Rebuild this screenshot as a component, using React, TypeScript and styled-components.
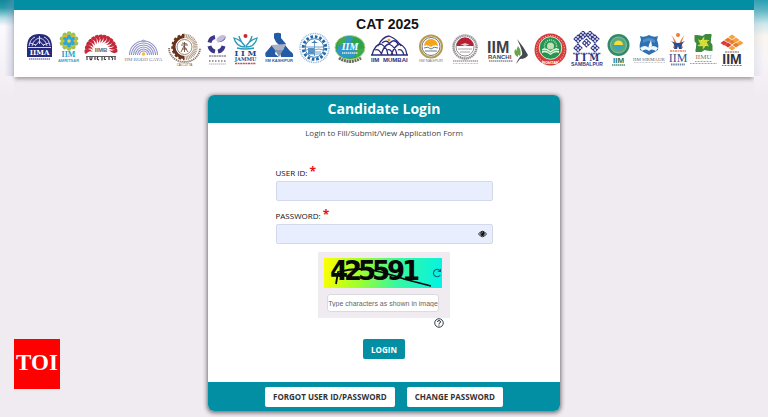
import React, { useState } from "react";
import styled, { createGlobalStyle } from "styled-components";

const teal = "#028fa3";

const GlobalStyle = createGlobalStyle`
  * { box-sizing: border-box; }
  body {
    margin: 0;
    background: #f0ebf0;
    color: #333;
    font-family: "Open Sans", "Noto Sans", sans-serif;
  }
`;

/* ---------- layout ---------- */

const Page = styled.div`
  display: grid;
  grid-template-columns: 14px minmax(0, 1fr) 14px;
  min-height: 100vh;
`;

const Edge = styled.div<{ $side: "left" | "right" }>`
  background: ${(p) =>
    p.$side === "left"
      ? "linear-gradient(to left, rgba(140, 150, 185, 0.35), rgba(255, 255, 255, 0) 70%) 0 0 / 100% 76px no-repeat, linear-gradient(#12889c 0, #2a9aab 8px, #b5dce4 18px, #fbfafd 26px, #f7f4f9 60px, #f0ebf0 96px)"
      : "linear-gradient(to right, rgba(140, 150, 185, 0.15), rgba(255, 255, 255, 0) 70%) 0 0 / 100% 76px no-repeat, linear-gradient(#28a0b2 0, #5bb6c4 10px, #cfe8ec 24px, #faf5ee 36px, #f7f4f9 60px, #f0ebf0 96px)"};
`;

const Content = styled.div`
  display: flex;
  flex-direction: column;
`;

const Header = styled.header`
  border-top: 10px solid ${teal};
  padding: 7px 10px 10px 11px;
  background: #fff;
  box-shadow: 0 3px 4px -1px rgba(60, 50, 60, 0.45);
`;

const ExamTitle = styled.h1`
  margin: 0;
  padding-left: 6px;
  font: bold 14px/14px "Liberation Sans", Arial, sans-serif;
  color: #151515;
  text-align: center;
`;

const LogoRow = styled.div`
  display: flex;
  justify-content: space-between;
`;

const LogoSvg = styled.svg`
  display: block;
  flex: none;
  height: 36px;
  font-family: "Liberation Sans", Arial, sans-serif;
`;

const Main = styled.main`
  display: flex;
  justify-content: center;
  padding: 18px 0 6px;
`;

const Card = styled.section`
  width: 352px;
  border-radius: 6px;
  overflow: hidden;
  background: #fff;
  box-shadow: 0 1px 4px 1px rgba(50, 45, 50, 0.65);
`;

const CardTitle = styled.h2`
  margin: 0;
  background: ${teal};
  color: #fff;
  font-size: 14px;
  line-height: 28px;
  font-weight: 700;
  text-align: center;
`;

const CardBody = styled.form`
  display: flex;
  flex-direction: column;
  align-items: center;
  padding: 2px 0 23px;
`;

const Intro = styled.p`
  margin: 0 0 25px;
  font-size: 8px;
  line-height: 16px;
  color: #444;
`;

const Field = styled.div`
  width: 217px;
  margin-bottom: 8px;
`;

const Label = styled.label`
  display: block;
  padding-bottom: 1px;
  font-size: 8px;
  line-height: 14px;
  color: #111;
`;

const Required = styled.span`
  color: #ee1111;
  font-size: 12px;
  font-weight: 700;
  line-height: 10px;
`;

const InputWrap = styled.div`
  display: flex;
  align-items: center;
  height: 20px;
  padding-right: 5px;
  border: 1px solid #d3d9ea;
  border-radius: 2px;
  background: #e8eefe;
`;

const TextInput = styled.input`
  flex: 1;
  min-width: 0;
  height: 18px;
  padding: 0 6px;
  border: 0;
  background: transparent;
  font: inherit;
  font-size: 8px;
  outline-color: ${teal};
`;

const IconButton = styled.button`
  display: flex;
  padding: 0;
  border: 0;
  background: transparent;
  color: #111;
  cursor: pointer;
`;

const CaptchaPanel = styled.div`
  display: flex;
  flex-direction: column;
  align-items: center;
  gap: 6px;
  width: 132px;
  padding: 6px 8px 6px 6px;
  background: #f0ebf0;
`;

const CaptchaImage = styled.div`
  display: flex;
  align-items: center;
  justify-content: space-between;
  width: 118px;
  height: 30px;
  background: linear-gradient(100deg, #ffff00 0%, #9dff2e 32%, #38f7a0 62%, #00f3e8 100%);
`;

const CaptchaInput = styled.input`
  width: 112px;
  height: 18px;
  padding: 0;
  border: 1px solid #dcd9e0;
  border-radius: 3px;
  background: #fff;
  font: 7px "Liberation Sans", Arial, sans-serif;
  color: #333;
  text-align: center;
  &::placeholder { color: #666; opacity: 1; }
`;

const HelpRow = styled.div`
  display: flex;
  justify-content: flex-end;
  width: 132px;
  height: 21px;
  padding-right: 6px;
`;

const Button = styled.button<{ $primary?: boolean }>`
  height: 20px;
  padding: 0 8px;
  border: 0;
  border-radius: 2px;
  background: ${(p) => (p.$primary ? teal : "#fff")};
  color: ${(p) => (p.$primary ? "#fff" : "#333")};
  font: 700 8px "Open Sans", "Noto Sans", sans-serif;
  cursor: pointer;
`;

const CardFooter = styled.footer`
  display: flex;
  align-items: center;
  justify-content: center;
  gap: 12px;
  height: 29px;
  background: ${teal};
`;

const Badge = styled.div`
  position: fixed;
  left: 14px;
  bottom: 28px;
  width: 46px;
  height: 50px;
  background: #fe0000;
  color: #fff;
  font: bold 23px/47px "Liberation Serif", "Times New Roman", serif;
  text-align: center;
`;

/* ---------- institute logos ---------- */

type LogoProps = { name: string; width: number; children: React.ReactNode };

const Logo = ({ name, width, children }: LogoProps) => (
  <LogoSvg width={width} viewBox={`0 0 ${width} 36`} role="img" aria-label={name}>
    {children}
  </LogoSvg>
);

const turn = (n: number, step = 360 / n, start = 0) =>
  Array.from({ length: n }, (_, i) => start + i * step);

const serif = '"Liberation Serif", serif';
const slab = '"DejaVu Serif", serif';

const Ahmedabad = () => (
  <Logo name="IIM Ahmedabad" width={30}>
    <path d="M2 26V16Q2 3 14.500 3T27 16V26Z" fill="#26297c" />
    <g fill="none" stroke="#e9e9f5" strokeWidth=".9">
      <path d="M4 15Q5 8 10 6M25 15Q24 8 19 6M14.500 13V5M7 15Q8 9 14 7M22 15Q21 9 15 7M10 15L14.500 10L19 15M5 12L11 14M24 12L18 14" />
      <path d="M3 16.500H26" />
    </g>
    <text x="14.500" y="24" textAnchor="middle" fontSize="7" fontWeight="700" fontFamily={slab} fill="#fff">IIMA</text>
    <path d="M4 28H25" stroke="#7a7cb4" strokeWidth="1.400" strokeDasharray="1.500 .5" />
  </Logo>
);

const Amritsar = () => (
  <Logo name="IIM Amritsar" width={26}>
    <g transform="translate(14 10)">
      {turn(10).map((a) => (
        <circle key={a} cx="0" cy="-7.500" r="2.200" fill="#8fc457" transform={`rotate(${a})`} />
      ))}
      <circle r="8" fill="#a7c545" />
      {turn(8).map((a) => (
        <path key={a} d="M0 -8L2 -5L0 -3L-2 -5Z" fill="#f1b133" transform={`rotate(${a})`} />
      ))}
      {turn(6).map((a) => (
        <ellipse key={a} cy="-3" rx="2" ry="3.500" fill="#2ba9d9" transform={`rotate(${a})`} />
      ))}
      <circle r="1.800" fill="#f6d34b" />
    </g>
    <text x="13.500" y="26" textAnchor="middle" fontSize="8" fontWeight="700" fontFamily={serif} fill="#2b9dcb">IIM</text>
    <text x="13.500" y="31" textAnchor="middle" fontSize="4" fontWeight="700" fill="#35a4cf">AMRITSAR</text>
  </Logo>
);

const Bangalore = () => (
  <Logo name="IIM Bangalore" width={41}>
    <g transform="translate(20 20)">
      {turn(13, 15, -90).map((a) => (
        <path key={a} d="M-1 -8Q4 -12 1 -16.500Q-2 -17 -3 -15Q1 -12 -1 -8Z" fill="#c22a3b" transform={`rotate(${a})`} />
      ))}
    </g>
    <text x="20" y="21" textAnchor="middle" fontSize="6" fontWeight="700" fill="#666">IIMB</text>
    <path d="M5 25.500H35" stroke="#333" strokeWidth=".8" />
    <path d="M6 26V29M9 26V28Q11 30 11 26M14 26V29M17 26Q15 28 18 29M21 26V29.500M24 26Q22 29 25 28.500M28 26V29M30 26Q33 27 31 29M34 26V29" fill="none" stroke="#333" strokeWidth="1.100" />
  </Logo>
);

const BodhGaya = () => (
  <Logo name="IIM Bodh Gaya" width={43}>
    <g fill="none" stroke="#9095c7" strokeWidth="1.100">
      {[4, 6, 8, 10, 12, 14].map((r) => (
        <path key={r} d={`M${21.5 - r} 24A${r} ${r} 0 0 1 ${21.5 + r} 24`} />
      ))}
    </g>
    <path d="M18 11Q21.500 6 25 11Z" fill="#a6a9d0" />
    <circle cx="21.500" cy="23" r="1.800" fill="#f0bd3d" />
    <text x="21.500" y="30" textAnchor="middle" fontSize="5" fontFamily={serif} fill="#7479a4">IIM BODH GAYA</text>
  </Logo>
);

const Calcutta = () => (
  <Logo name="IIM Calcutta" width={39}>
    <path d="M19.500 5.500A10.500 10.500 0 0 0 19.500 26.500" fill="none" stroke="#68331c" strokeWidth="3" />
    <path d="M19.500 4A12 12 0 0 0 19.500 28" fill="none" stroke="#68331c" strokeWidth="2.500" strokeDasharray="2.500 2" />
    <path d="M19.500 5A11 11 0 0 1 19.500 27" fill="none" stroke="#b49d87" strokeWidth="4.500" strokeDasharray="1 .6" />
    <circle cx="19.500" cy="16" r="7.500" fill="#fff" stroke="#8c6a55" strokeWidth=".8" />
    <path d="M19.500 11V21M16 14H23M17 18H22M16 21L19 15L23 21M17 12L22 13" stroke="#75513e" strokeWidth=".9" fill="none" />
    <path d="M4 17A15.500 14 0 0 0 35 17" fill="none" stroke="#8b7466" strokeWidth="1.800" strokeDasharray="1.300 .7" />
    <text x="19.500" y="35" textAnchor="middle" fontSize="3" fill="#685046">CALCUTTA</text>
  </Logo>
);

const Indore = () => (
  <Logo name="IIM Indore" width={27}>
    <g fill="none" stroke="#3a3688" strokeWidth="4">
      <path d="M11 6A7 7 0 0 0 5.500 11.500" />
      <path d="M5.500 15A7 7 0 0 0 11 20.500" />
      <path d="M14 20.500A7 7 0 0 0 19.500 15" />
    </g>
    <ellipse cx="17" cy="7.500" rx="5" ry="3" fill="#c3bedd" transform="rotate(-30 17 7.500)" />
    <path d="M13 11Q19 11 22 5Q21 12 13 11Z" fill="#655eaa" />
    <path d="M5 25H22" stroke="#96899a" strokeWidth="1.600" strokeDasharray="2 .5" />
    <path d="M5 30H23" stroke="#a29aa2" strokeWidth="2" strokeDasharray="1.500 1.500" />
    <path d="M5 33H22" stroke="#b4adb4" strokeWidth="1" strokeDasharray="1.500 .5" />
  </Logo>
);

const Jammu = () => (
  <Logo name="IIM Jammu" width={30}>
    <circle cx="14.500" cy="5" r="2" fill="#cd2534" />
    <g fill="none" stroke="#2b99b8" strokeWidth="1.300">
      <path d="M14.500 16Q5 16 3 7Q10 9 14 15Q9 10 8 5" />
      <path d="M14.500 16Q24 16 26 7Q19 9 15 15Q20 10 21 5" />
      <path d="M6 17Q14 19 23 17" />
    </g>
    <text x="14.500" y="25" textAnchor="middle" fontSize="8" fontWeight="700" fontFamily={slab} fill="#174689">I I M</text>
    <text x="14.500" y="30" textAnchor="middle" fontSize="5" fontWeight="700" fontFamily={slab} fill="#245391">JAMMU</text>
    <path d="M4 32.500H25" stroke="#ca4b56" strokeWidth="1.600" strokeDasharray="2 .6" />
  </Logo>
);

const Kashipur = () => (
  <Logo name="IIM Kashipur" width={36}>
    <path d="M13 2.500Q17 1 20 2.500V7L25 13L19 15L15 11L13 7Z" fill="#235ba6" />
    <path d="M11 14L15 19L14 23L18 26H5Q3 22 6 20Z" fill="#235ba6" />
    <path d="M24 14L29 20Q33 22 32 26H20L19 21L22 19Z" fill="#235ba6" />
    <path d="M10 14L25 13L22 19L14 19Z" fill="#aab2c2" />
    <path d="M14 19L22 19L18 26Z" fill="#8793ab" />
    <text x="18" y="31" textAnchor="middle" fontSize="4" fontWeight="700" fill="#235ba6">IIM KASHIPUR</text>
  </Logo>
);

const Kozhikode = () => (
  <Logo name="IIM Kozhikode" width={34}>
    <circle cx="17.500" cy="17" r="14.500" fill="none" stroke="#95b5d4" strokeWidth="1.500" strokeDasharray="1 .8" />
    <circle cx="17.500" cy="17" r="11.300" fill="none" stroke="#2369a8" strokeWidth="3" strokeDasharray="2.600 1.840" />
    <circle cx="17.500" cy="17" r="9.300" fill="#fff" stroke="#417eb4" strokeWidth="1" />
    <path d="M8.500 16H26.500M9 19Q12 17 17 19Q22 17 26 19M17.500 9V25M11 23H24M11 21H24" fill="none" stroke="#488bc0" strokeWidth=".8" />
    <path d="M14 12L17.500 10L21 12Z" fill="#3978b2" />
    <path d="M11 17H17V23H11Z" fill="#5a90c2" />
  </Logo>
);

const Lucknow = () => (
  <Logo name="IIM Lucknow" width={38}>
    <ellipse cx="19" cy="16.500" rx="15" ry="12" fill="#2fa24e" stroke="#b4d37b" />
    <path d="M5 20Q10 10 12 6Q18 4 23 7L19 11L26 15L24 25Q15 30 8 24Z" fill="#3196c8" />
    <path d="M8 8L16 6L13 13L7 15ZM25 19L33 17Q31 24 25 27Z" fill="#42aa4a" />
    <text x="19" y="19" textAnchor="middle" fontSize="10" fontStyle="italic" fontWeight="700" fontFamily={serif} fill="#fff">IIM</text>
    <path d="M11 22H27" stroke="#d7efe0" strokeWidth="1.600" strokeDasharray="1.500 .5" />
    <path d="M8 27Q19 34 30 27" fill="none" stroke="#676b5b" strokeWidth="3" strokeDasharray="2 .7" />
  </Logo>
);

const Mumbai = () => (
  <Logo name="IIM Mumbai" width={45}>
    <g fill="none" stroke="#2c2e7b" strokeWidth="1.300">
      <path d="M3 24Q6 13 12 13Q18 16 19 24M12 24Q15 14 20 13Q27 16 28 24M22 24Q26 14 31 13Q37 16 38 24M9 15Q13 6 20 5Q28 8 32 15M13 12Q18 8 21 13M21 12Q25 7 29 13M2 24H39M6 19Q10 17 13 24M18 19Q22 17 24 24M29 19Q33 17 35 24" />
    </g>
    <circle cx="20" cy="9" r="1.500" fill="#ef9b36" />
    <text x="2" y="31" fontSize="6" fontWeight="700" fill="#2c2e7b">IIM</text>
    <text x="14" y="31" fontSize="6" fontWeight="700" fill="#2c2e7b">MUMBAI</text>
  </Logo>
);

const Nagpur = () => (
  <Logo name="IIM Nagpur" width={34}>
    <circle cx="17" cy="15.500" r="11" fill="#fff" stroke="#b39a56" strokeWidth="2" />
    <circle cx="17" cy="15.500" r="9" fill="none" stroke="#4d544f" strokeWidth=".8" />
    <path d="M10 15A7 7 0 0 1 24 15Q20 13 17 16Q13 13 10 15Z" fill="#f5a51d" />
    <path d="M10 17Q14 15 17 18Q20 15 24 17M11 20H23" fill="none" stroke="#657b87" strokeWidth="1" />
    <text x="17" y="31" textAnchor="middle" fontSize="4" fill="#78766f">IIM NAGPUR</text>
  </Logo>
);

const Raipur = () => (
  <Logo name="IIM Raipur" width={35}>
    <circle cx="17" cy="16" r="11.500" fill="none" stroke="#959095" strokeWidth="2.400" strokeDasharray="1.500 .5" />
    <circle cx="17" cy="16" r="9" fill="#fff" stroke="#958e8f" />
    <path d="M8.500 15A8.500 8.500 0 0 1 25.500 15Z" fill="#b71f35" />
    <path d="M12 14L17 12L22 14Q19 14 17 15Q15 14 12 14Z" fill="#fff" opacity=".75" />
    <path d="M10 18H24M12 21H22" stroke="#a5a1a1" />
    <path d="M5 30H30" stroke="#a29d9e" strokeWidth="1.600" strokeDasharray="1.500 .5" />
    <path d="M5 32.500H30" stroke="#c4bfc1" strokeWidth="1" strokeDasharray="1 .5" />
  </Logo>
);

const Ranchi = () => (
  <Logo name="IIM Ranchi" width={48}>
    <text x="4" y="22" fontSize="16" fontWeight="700" fill="#3d4047">IIM</text>
    <text x="5" y="28" fontSize="6" fontWeight="700" fill="#45484c">RANCHI</text>
    <path d="M6 30H30" stroke="#8b8d8f" strokeWidth="1.400" strokeDasharray="1.500 .5" />
    <path d="M34 8Q40 15 45 24Q43 28 37 28L33 33Q36 26 39 24Q40 20 34 8Z" fill="#454951" />
    <path d="M35 15Q39 20 37 25Q31 22 35 15ZM32 18Q36 22 35 26Q30 24 32 18Z" fill="#68a549" />
  </Logo>
);

const Rohtak = () => (
  <Logo name="IIM Rohtak" width={38}>
    <circle cx="19.500" cy="18.500" r="16" fill="#d63b3c" />
    <circle cx="19.500" cy="18.500" r="14" fill="none" stroke="#f2a39c" strokeWidth="1.200" strokeDasharray="1 1.500" />
    <circle cx="19.500" cy="17" r="11.300" fill="#259651" stroke="#fff" strokeWidth=".8" />
    <circle cx="19.500" cy="15" r="6" fill="none" stroke="#b9deb5" strokeWidth="1.500" strokeDasharray="1 1" />
    <circle cx="19.500" cy="15" r="3.500" fill="#c6dfba" />
    <path d="M11 18Q15 16 19.500 20Q24 16 28 18V22Q24 20 19.500 24Q15 20 11 22Z" fill="#e8f4df" />
    <path d="M11 19.500Q15 18 19.500 22Q24 18 28 19.500" fill="none" stroke="#4ca565" strokeWidth=".8" />
    <text x="19.500" y="33" textAnchor="middle" fontSize="4" fontWeight="700" fill="#fff">ROHTAK</text>
  </Logo>
);

const Sambalpur = () => (
  <Logo name="IIM Sambalpur" width={34}>
    <g fill="none" stroke="#303786" strokeWidth="1.100">
      {[[17.5, 12], [9, 8], [26, 8], [9, 17], [26, 17], [14, 4], [21, 4]].map(([x, y]) => (
        <g key={`${x}-${y}`} transform={`translate(${x} ${y})`}>
          <path d="M0 -4L4 0L0 4L-4 0ZM-2 -2L2 2M2 -2L-2 2" strokeDasharray="3 .5" />
        </g>
      ))}
    </g>
    <path d="M4 22.500H32" stroke="#5b609e" strokeWidth="1.400" strokeDasharray="2 .5" />
    <text x="18" y="30" textAnchor="middle" fontSize="9" fontWeight="700" fontFamily={slab} fill="#28307f">I I M</text>
    <text x="18" y="35" textAnchor="middle" fontSize="5" fontWeight="700" fill="#343a88">SAMBALPUR</text>
  </Logo>
);

const Shillong = () => (
  <Logo name="IIM Shillong" width={28}>
    <circle cx="15.500" cy="14" r="11" fill="#328b68" />
    <circle cx="15.500" cy="14" r="8" fill="#5ba583" stroke="#86c2a5" strokeWidth="1" />
    <path d="M11 14A4.500 4.500 0 0 1 20 14Z" fill="#f6e02e" />
    <path d="M11 14A4.500 4.500 0 0 0 20 14Z" fill="#36a4c9" />
    <text x="15.500" y="32" textAnchor="middle" fontSize="8" fontWeight="700" fill="#1f7657">IIM</text>
    <path d="M9 34H22" stroke="#50917b" strokeWidth="1.400" strokeDasharray="1.500 .5" />
  </Logo>
);

const Sirmaur = () => (
  <Logo name="IIM Sirmaur" width={37}>
    <path d="M9 5Q13 7 18 4Q23 7 27 5L26 9Q28 13 27 19Q24 21 18 24Q12 21 9 19Q8 13 10 9Z" fill="#2f70b1" />
    <path d="M12 9Q18 5 24 9V12Q18 8 12 12Z" fill="#4f8fc7" />
    <path d="M9 17Q14 13 18 17Q22 13 27 17L25 20Q20 17 18 20Q15 17 11 20Z" fill="#f1f7ff" />
    <path d="M20 9L21 15L17 18L18 14Z" fill="#fff" />
    <text x="18" y="30" textAnchor="middle" fontSize="5" fontFamily={serif} fill="#66666c">IIM SIRMAUR</text>
    <path d="M3 31.500H34" stroke="#bcbcc0" strokeWidth=".8" strokeDasharray="1 .5" />
  </Logo>
);

const Trichy = () => (
  <Logo name="IIM Trichy" width={20}>
    <circle cx="10" cy="4" r="2" fill="#ee7936" />
    <path d="M3 4Q9 9 9 17H5Q8 10 3 4ZM17 4Q11 9 11 17H15Q12 10 17 4Z" fill="#ef7c36" />
    <path d="M3 10Q10 14 17 10Q12 14 14 18H11L10 15L9 18H6Q8 14 3 10Z" fill="#284c93" />
    <path d="M2 20H18" stroke="#ec8b59" strokeWidth="1.600" strokeDasharray="2 .5" />
    <text x="10" y="31" textAnchor="middle" fontSize="12" fontFamily={serif} fill="#36558f">IIM</text>
    <path d="M3 33.500H17" stroke="#6d84a8" strokeWidth="1.800" strokeDasharray="1.500 .7" />
  </Logo>
);

const Udaipur = () => (
  <Logo name="IIM Udaipur" width={31}>
    <g transform="translate(15.500 12)">
      {turn(4).map((a) => (
        <path key={a} d="M-8 -8L-1 -7L2 -9H8L7 -1L2 -3L-3 -3Z" fill="#3e893e" transform={`rotate(${a})`} />
      ))}
      {turn(6).map((a) => (
        <path key={a} d="M0 0Q-4 -3 1 -6.500Q0 -3 2 -2Z" fill="#d7dc31" transform={`rotate(${a})`} />
      ))}
    </g>
    <text x="15.500" y="28" textAnchor="middle" fontSize="7" fontFamily={serif} fill="#6f7c6b">IIMU</text>
    <path d="M7 30.500H24M2 32.500H29" stroke="#9ba595" strokeWidth="1" strokeDasharray="1 .5" />
  </Logo>
);

const Visakhapatnam = () => (
  <Logo name="IIM Visakhapatnam" width={25}>
    {[[13, 6, 0], [9, 9, 1], [17, 9, 0], [5, 12, 2], [13, 11, 1], [21, 12, 0], [9, 14, 2], [17, 14, 1], [13, 17, 0]].map(([x, y, c]) => (
      <path key={`${x}-${y}`} d="M0 -2.500L3.500 0L0 2.500L-3.500 0Z" transform={`translate(${x} ${y})`} fill={["#f3a23c", "#ee7a2e", "#dc3a32"][c]} />
    ))}
    <path d="M6 21H20" stroke="#7b5856" strokeWidth="1.200" strokeDasharray="2 .5" />
    <text x="13" y="33" textAnchor="middle" fontSize="14" fontWeight="700" fill="#313137">IIM</text>
    <path d="M3 34.500H23" stroke="#777" strokeWidth="1" strokeDasharray="1 .5" />
  </Logo>
);

const logos = [
  Ahmedabad, Amritsar, Bangalore, BodhGaya, Calcutta, Indore, Jammu,
  Kashipur, Kozhikode, Lucknow, Mumbai, Nagpur, Raipur, Ranchi,
  Rohtak, Sambalpur, Shillong, Sirmaur, Trichy, Udaipur, Visakhapatnam,
];

/* ---------- small icons ---------- */

const EyeIcon = () => (
  <svg width="9" height="8" viewBox="0 0 18 16" aria-hidden="true">
    <path d="M1 8Q9 -3 17 8Q9 19 1 8Z" fill="none" stroke="currentColor" strokeWidth="1.800" />
    <circle cx="9" cy="7.500" r="4.500" fill="currentColor" />
    <path d="M7 7Q7 5 9 5" fill="none" stroke="#e8eefe" strokeWidth="1.200" />
  </svg>
);

const RefreshIcon = () => (
  <svg width="10" height="12" viewBox="0 0 10 12" aria-hidden="true">
    <path d="M7.800 3.500A3.700 3.700 0 1 0 8.300 8" fill="none" stroke="#0c6378" strokeWidth="1.100" />
    <path d="M9 1.500V5H5.500Z" fill="#0c6378" />
  </svg>
);

const HelpIcon = () => (
  <svg width="10" height="10" viewBox="0 0 20 20" aria-hidden="true">
    <circle cx="10" cy="10" r="8.500" fill="none" stroke="#333b45" strokeWidth="2" />
    <path d="M7 8Q7 5 10 5T13 8Q13 10 10 11V13" fill="none" stroke="#333b45" strokeWidth="2" />
    <circle cx="10" cy="15.500" r="1.200" fill="#333b45" />
  </svg>
);

const captchaDigits = [
  { digit: "4", x: 6 },
  { digit: "2", x: 20 },
  { digit: "5", x: 34 },
  { digit: "5", x: 48 },
  { digit: "9", x: 63 },
  { digit: "1", x: 78 },
];

const CaptchaSvg = styled.svg`
  display: block;
  overflow: visible;
  font: bold 26px "DejaVu Sans", sans-serif;
  fill: #080808;
`;

const CaptchaDrawing = () => (
  <CaptchaSvg width="108" height="30" viewBox="0 0 108 30" role="img" aria-label="425591">
    {captchaDigits.map(({ digit, x }) => (
      <text key={x} x={x} y="22">{digit}</text>
    ))}
    <path d="M12 26L14 14Q36 8 57 14T80 21L107 28" fill="none" stroke="#080808" strokeWidth="1.800" />
  </CaptchaSvg>
);

export default function App() {
  const [visible, setVisible] = useState(false);

  return (
    <>
      <GlobalStyle />
      <Page>
        <Edge $side="left" />
        <Content>
          <Header>
            <ExamTitle>CAT 2025</ExamTitle>
            <LogoRow>
              {logos.map((Institute, i) => (
                <Institute key={i} />
              ))}
            </LogoRow>
          </Header>
          <Main>
            <Card>
              <CardTitle>Candidate Login</CardTitle>
              <CardBody onSubmit={(e) => e.preventDefault()}>
                <Intro>Login to Fill/Submit/View Application Form</Intro>
                <Field>
                  <Label htmlFor="user-id">USER ID: <Required>*</Required></Label>
                  <InputWrap>
                    <TextInput id="user-id" type="text" />
                  </InputWrap>
                </Field>
                <Field>
                  <Label htmlFor="password">PASSWORD: <Required>*</Required></Label>
                  <InputWrap>
                    <TextInput id="password" type={visible ? "text" : "password"} />
                    <IconButton type="button" aria-label="Show password" onClick={() => setVisible(!visible)}>
                      <EyeIcon />
                    </IconButton>
                  </InputWrap>
                </Field>
                <CaptchaPanel>
                  <CaptchaImage>
                    <CaptchaDrawing />
                    <IconButton type="button" aria-label="Refresh characters">
                      <RefreshIcon />
                    </IconButton>
                  </CaptchaImage>
                  <CaptchaInput aria-label="Captcha" placeholder="Type characters as shown in image" />
                </CaptchaPanel>
                <HelpRow>
                  <IconButton type="button" aria-label="Help">
                    <HelpIcon />
                  </IconButton>
                </HelpRow>
                <Button $primary type="submit">LOGIN</Button>
              </CardBody>
              <CardFooter>
                <Button type="button">FORGOT USER ID/PASSWORD</Button>
                <Button type="button">CHANGE PASSWORD</Button>
              </CardFooter>
            </Card>
          </Main>
        </Content>
        <Edge $side="right" />
      </Page>
      <Badge>TOI</Badge>
    </>
  );
}
